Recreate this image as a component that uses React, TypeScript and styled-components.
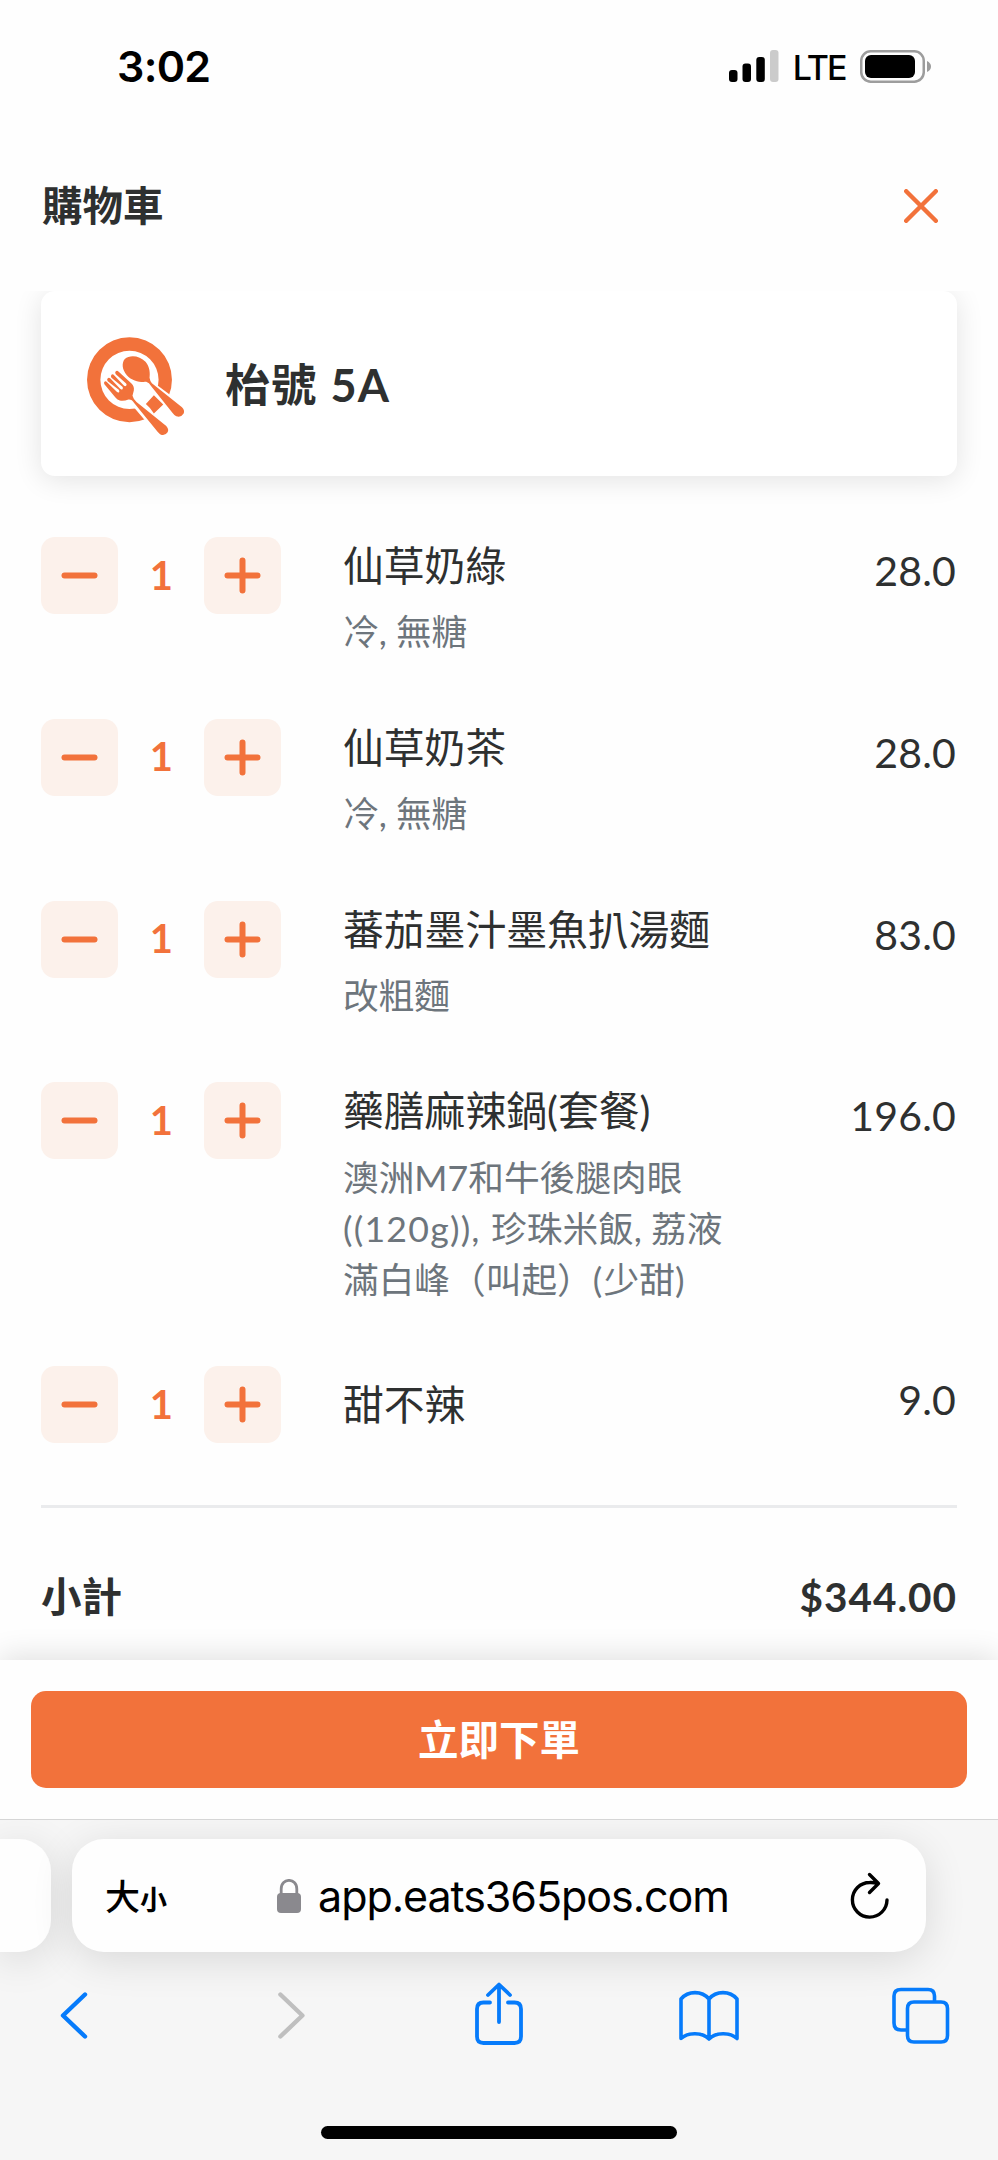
import React from 'react';
import styled, { createGlobalStyle } from 'styled-components';

const ORANGE = '#f2723b';
const INK = '#2e3030';
const BLUE = '#067bfb';
const SANS = `Lato, 'Noto Sans CJK TC', sans-serif`;
const SYSTEM = `Inter, 'Noto Sans CJK TC', sans-serif`;

const GlobalStyle = createGlobalStyle`
  * { box-sizing: border-box; }
  body { margin: 0; background: #fefefe; }
`;

const Screen = styled.div`
  width: 998px;
  height: 2160px;
  display: flex;
  flex-direction: column;
  overflow: hidden;
  background: #fefefe;
  color: ${INK};
  font-family: ${SANS};
`;

const StatusBar = styled.header`
  height: 132px;
  padding: 0 67px 0 117px;
  display: flex;
  align-items: center;
  justify-content: space-between;
  color: #000;
  font-family: ${SYSTEM};
`;

const Clock = styled.span`
  font-size: 43px;
  font-weight: 600;
  line-height: 52px;
  letter-spacing: -0.7px;
`;

const StatusIcons = styled.div`
  display: flex;
  align-items: center;
  svg { display: block; }
`;

const Network = styled.span`
  font-size: 34px;
  font-weight: 500;
  line-height: 40px;
  letter-spacing: -2px;
  margin: 3px 14.5px 0 14px;
`;

const TitleBar = styled.div`
  height: 159px;
  padding: 0 60px 11px 42px;
  display: flex;
  align-items: center;
  justify-content: space-between;
`;

const Title = styled.h1`
  margin: 0;
  font-size: 40.5px;
  line-height: 56px;
  font-weight: 600;
`;

const IconButton = styled.button`
  display: block;
  padding: 0;
  border: 0;
  background: none;
  svg { display: block; }
`;

const Content = styled.main`
  height: 1369px;
  padding: 0 41px;
  overflow: hidden;
`;

const TableCard = styled.section`
  height: 185px;
  padding: 6px 42px 0 42px;
  display: flex;
  align-items: center;
  gap: 35px;
  border-radius: 14px;
  background: #fff;
  box-shadow: 0 4px 28px rgba(0, 0, 0, 0.11);
`;

const TableName = styled.h2`
  margin: 0 0 4px;
  font-size: 45px;
  line-height: 60px;
  font-weight: 700;
  letter-spacing: 1.2px;
  word-spacing: 1px;
`;

const ItemList = styled.ul`
  list-style: none;
  margin: 0;
  padding: 61px 0 62px;
  display: flex;
  flex-direction: column;
  gap: 61.5px;
`;

const ItemRow = styled.li`
  display: flex;
  align-items: flex-start;
`;

const Stepper = styled.div`
  width: 240.5px;
  height: 77px;
  margin-right: 61.5px;
  display: flex;
  align-items: center;
  justify-content: space-between;
`;

const StepButton = styled.button`
  width: 77px;
  height: 77px;
  padding: 0;
  border: 0;
  border-radius: 14px;
  display: flex;
  align-items: center;
  justify-content: center;
  background: #fcf1eb;
`;

const Quantity = styled.span`
  margin-bottom: 2px;
  color: ${ORANGE};
  font-size: 40px;
  line-height: 48px;
  font-weight: 700;
`;

const ItemText = styled.div<{ $single: boolean }>`
  flex: 1;
  min-height: 77px;
  display: flex;
  flex-direction: column;
  gap: 12px;
  justify-content: ${(p) => (p.$single ? 'center' : 'flex-start')};
`;

const ItemName = styled.div`
  font-size: 40.8px;
  line-height: 57.3px;
  white-space: nowrap;
`;

const ItemOptions = styled.div`
  color: #6d757c;
  font-size: 35.7px;
  line-height: 51px;
  white-space: pre;
`;

const Latin = styled.span`
  letter-spacing: 1.2px;
`;

const Price = styled.div`
  padding: 5px 1px 0 0;
  font-size: 41px;
  line-height: 57px;
  letter-spacing: 0.2px;
`;

const Subtotal = styled.div`
  height: 156px;
  padding-top: 60px;
  display: flex;
  justify-content: space-between;
  border-top: 3px solid #eaebed;
  font-size: 40.5px;
  line-height: 57px;
  font-weight: 700;
`;

const Amount = styled.span`
  letter-spacing: 1px;
`;

const CheckoutBar = styled.div`
  height: 159px;
  flex-shrink: 0;
  padding: 31px 31px 0;
  background: #fefefe;
  box-shadow: 0 -4px 28px rgba(0, 0, 0, 0.12);
`;

const CheckoutButton = styled.button`
  width: 100%;
  height: 97px;
  padding: 0;
  border: 0;
  border-radius: 15px;
  background: ${ORANGE};
  color: #fff;
  font-family: ${SANS};
  font-size: 40.5px;
  font-weight: 600;
  line-height: 57px;
`;

const Browser = styled.footer`
  height: 341px;
  flex-shrink: 0;
  border-top: 1.5px solid #d6d6d6;
  background: #f6f6f6;
  font-family: ${SYSTEM};
  color: #000;
  overflow: hidden;
`;

const TabStrip = styled.div`
  display: flex;
  gap: 21px;
  padding-top: 19px;
`;

const PreviousTab = styled.div`
  width: 51px;
  height: 113px;
  border-radius: 0 32px 32px 0;
  background: #fefefe;
  box-shadow: 0 8px 42px rgba(0, 0, 0, 0.12);
`;

const AddressBar = styled.div`
  width: 854px;
  height: 113px;
  padding: 0 36px 0 33px;
  display: flex;
  align-items: center;
  justify-content: space-between;
  border-radius: 32px;
  background: #fefefe;
  box-shadow: 0 8px 42px rgba(0, 0, 0, 0.12);
`;

const TextSize = styled.div`
  width: 66px;
  margin-top: 7px;
  display: flex;
  align-items: baseline;
  font-weight: 500;
  font-size: 35px;
  line-height: 48px;
`;

const SmallGlyph = styled.span`
  font-size: 27px;
  font-weight: 700;
`;

const Address = styled.div`
  margin-right: 15px;
  display: flex;
  align-items: center;
  gap: 17px;
  font-size: 43px;
  line-height: 56px;
  letter-spacing: -1.05px;
  svg { display: block; }
`;

const Toolbar = styled.nav`
  padding: 28px 47px 0 44px;
  display: flex;
  justify-content: space-between;
`;

const HomeIndicator = styled.div`
  width: 356px;
  height: 13px;
  margin: 75.5px auto 0;
  border-radius: 7px;
  background: #000;
`;

const TableLogo = () => (
  <svg width="107" height="107" viewBox="40 40 320 320" fill={ORANGE}>
    <path
      fillRule="evenodd"
      d="M179 53a127 127 0 1 0 0 254a127 127 0 1 0 0-254ZM179 93a87 87 0 1 1 0 174a87 87 0 1 1 0-174Z"
    />
    <path d="M215 185L240 180L310 232L300 275L262 292L215 262L180 228Z" fill="#fff" />
    <path d="M247 193L315 240L350 280L325 305L268 245L232 196Z" fill="#fff" />
    <path d="M183 235L220 262L292 312L290 350L250 330L176 243Z" fill="#fff" />
    <path d="M228 252L252 226L280 254L252 281Q243 264 228 252Z" />
    <path d="M165 118C180 104 210 108 227 126C240 141 241 161 239 174Q240 183 246 190L336 262Q345 271 341 281Q333 294 319 289Q313 286 308 279L244 199Q238 188 229 186C211 188 186 183 171 166C157 150 155 130 165 118Z" />
    <path d="M137 156Q141 151 146 155L185 191Q194 200 192 212L188 228Q190 237 200 246L289 318Q298 328 293 337Q286 348 273 344Q268 341 263 335L193 249Q186 238 176 239Q163 244 150 242Q143 240 137 233L104 193Q101 188 105 185Q108 183 112 187L141 216Q145 220 148 217Q150 214 147 210L114 184Q110 179 114 175Q118 173 122 176L151 207Q155 211 158 208Q161 205 158 201L125 174Q122 169 125 165Q129 162 133 166L162 197Q166 201 169 198Q172 195 169 191L138 163Q135 159 137 156Z" />
  </svg>
);

const Minus = () => (
  <svg width="37" height="37" stroke={ORANGE} strokeWidth="6" strokeLinecap="round">
    <path d="M3.5 18.5H33.5" />
  </svg>
);

const Plus = () => (
  <svg width="37" height="37" stroke={ORANGE} strokeWidth="6" strokeLinecap="round">
    <path d="M3.5 18.5H33.5M18.5 3.5V33.5" />
  </svg>
);

const items = [
  { name: '仙草奶綠', options: '冷, 無糖', price: '28.0' },
  { name: '仙草奶茶', options: '冷, 無糖', price: '28.0' },
  { name: '蕃茄墨汁墨魚扒湯麵', options: '改粗麵', price: '83.0' },
  {
    name: '藥膳麻辣鍋(套餐)',
    options: (
      <>
        澳洲M7和牛後腿肉眼{'\n'}
        <Latin>((120g)), </Latin>珍珠米飯, 荔液{'\n'}
        滿白峰（叫起）<Latin>(</Latin>少甜<Latin>)</Latin>
      </>
    ),
    price: '196.0',
  },
  { name: '甜不辣', options: null, price: '9.0' },
];

const toolIcons = [
  { x: 44, color: BLUE, d: 'M85 1994.5L63 2015.5L85 2036.5', w: 4.4 },
  { x: 255.6, color: '#bfbfbf', d: 'M280 1994.5L302 2015.5L280 2036.5', w: 4.4 },
  {
    x: 468,
    color: BLUE,
    d: 'M490 2002.5H483.5Q477 2002.5 477 2009V2036.5Q477 2043 483.5 2043H514.5Q521 2043 521 2036.5V2009Q521 2002.5 514.5 2002.5H508M499 2022V1986M488 1995L499 1984.5L510 1995',
    w: 3.8,
  },
  {
    x: 680,
    color: BLUE,
    d: 'M710 1999C703 1990.5 689 1990.5 682 1999V2038.5C689 2032 703 2032 710 2039C717 2032 731 2032 738 2038.5V1999C731 1990.5 717 1990.5 710 1999V2039',
    w: 3.6,
  },
  {
    x: 891,
    color: BLUE,
    d: 'M907 2030H901Q894 2030 894 2023V1996Q894 1989.5 901 1989.5H928Q934.5 1989.5 934.5 1996V2001M914 2002H941Q947.5 2002 947.5 2008.5V2035.5Q947.5 2042 941 2042H914Q907.5 2042 907.5 2035.5V2008.5Q907.5 2002 914 2002Z',
    w: 3.6,
  },
];

export default function App() {
  return (
    <Screen>
      <GlobalStyle />
      <StatusBar>
        <Clock>3:02</Clock>
        <StatusIcons>
          <svg width="50" height="32">
            <rect x="0" y="20" width="8.5" height="12" rx="3" />
            <rect x="13.5" y="13.5" width="8.5" height="18.5" rx="3" />
            <rect x="27.3" y="7" width="8.5" height="25" rx="3" />
            <rect x="41" y="0" width="8.5" height="32" rx="3" fill="#cbcbcb" />
          </svg>
          <Network>LTE</Network>
          <svg width="71" height="33">
            <rect x="1.25" y="1.25" width="62.5" height="30.5" rx="9.5" fill="none" stroke="#9d9d9d" strokeWidth="2.5" />
            <rect x="5" y="5" width="50" height="23" rx="6" />
            <path d="M67 11Q71 13 71 16.5T67 22Z" fill="#9d9d9d" />
          </svg>
        </StatusIcons>
      </StatusBar>
      <TitleBar>
        <Title>購物車</Title>
        <IconButton aria-label="關閉">
          <svg width="34" height="34" stroke={ORANGE} strokeWidth="4.4" strokeLinecap="round">
            <path d="M2.2 2.2L31.8 31.8M31.8 2.2L2.2 31.8" />
          </svg>
        </IconButton>
      </TitleBar>
      <Content>
        <TableCard>
          <TableLogo />
          <TableName>枱號 5A</TableName>
        </TableCard>
        <ItemList>
          {items.map((item) => (
            <ItemRow key={item.name}>
              <Stepper>
                <StepButton aria-label="減少"><Minus /></StepButton>
                <Quantity>1</Quantity>
                <StepButton aria-label="增加"><Plus /></StepButton>
              </Stepper>
              <ItemText $single={!item.options}>
                <ItemName>{item.name}</ItemName>
                {item.options && <ItemOptions>{item.options}</ItemOptions>}
              </ItemText>
              <Price>{item.price}</Price>
            </ItemRow>
          ))}
        </ItemList>
        <Subtotal>
          <span>小計</span>
          <Amount>$344.00</Amount>
        </Subtotal>
      </Content>
      <CheckoutBar>
        <CheckoutButton>立即下單</CheckoutButton>
      </CheckoutBar>
      <Browser>
        <TabStrip>
          <PreviousTab />
          <AddressBar>
            <TextSize>大<SmallGlyph>小</SmallGlyph></TextSize>
            <Address>
              <svg width="24" height="34" fill="#8a898e">
                <rect x="0" y="14" width="24" height="20" rx="4" />
                <path d="M4.2 16V10C4.2 -1.5 19.8 -1.5 19.8 10V16" fill="none" stroke="#8a898e" strokeWidth="2.8" />
              </svg>
              app.eats365pos.com
            </Address>
            <IconButton aria-label="重新載入">
              <svg width="40" height="50" fill="none" stroke="#000" strokeWidth="3.4" strokeLinecap="round" strokeLinejoin="round">
                <path d="M37 29A17.3 17.3 0 1 1 19.7 11.5Q24 11.3 27.5 12.5M19.5 3.5L28.5 12.5L19.5 21.5" />
              </svg>
            </IconButton>
          </AddressBar>
        </TabStrip>
        <Toolbar>
          {toolIcons.map((icon) => (
            <IconButton key={icon.x}>
              <svg
                width="60"
                height="70"
                viewBox={`${icon.x} 1980 60 70`}
                fill="none"
                stroke={icon.color}
                strokeWidth={icon.w}
                strokeLinecap="round"
                strokeLinejoin="round"
              >
                <path d={icon.d} />
              </svg>
            </IconButton>
          ))}
        </Toolbar>
        <HomeIndicator />
      </Browser>
    </Screen>
  );
}
